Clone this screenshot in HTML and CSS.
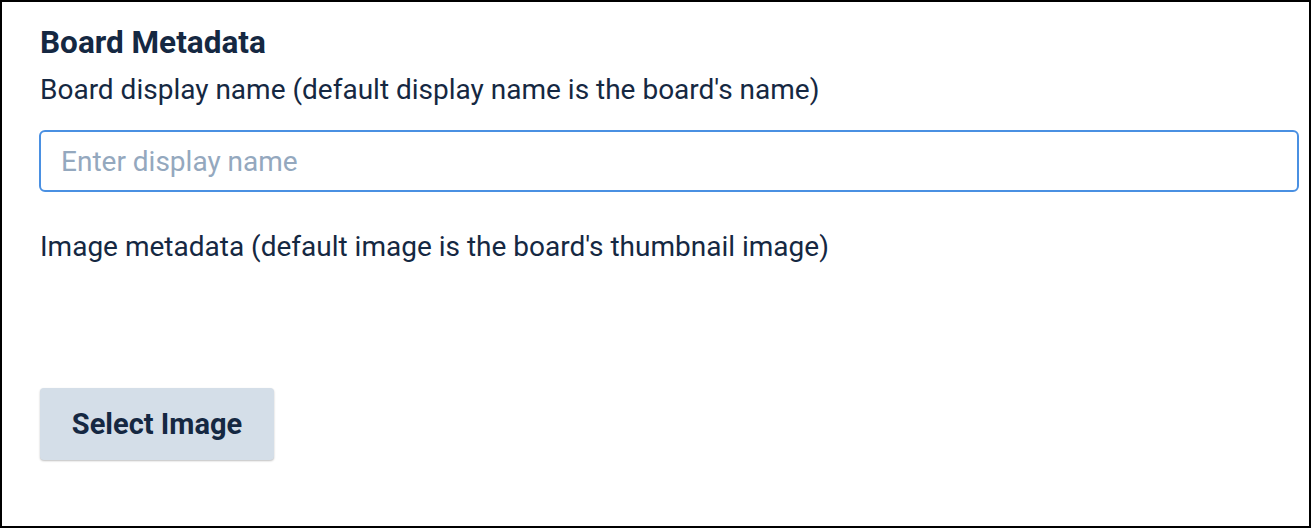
FILE: index.html
```html
<!DOCTYPE html>
<html>
<head>
<meta charset="utf-8">
<link rel="stylesheet" href="styles.css">
</head>
<body>
<div class="frame">
  <section class="panel">
    <h2 class="title">Board Metadata</h2>
    <label class="label" for="dn">Board display name (default display name is the board's name)</label>
    <input id="dn" class="text-input" type="text" placeholder="Enter display name">
    <p class="label image-label">Image metadata (default image is the board's thumbnail image)</p>
    <div class="image-slot"></div>
    <button class="btn" type="button">Select Image</button>
  </section>
</div>
</body>
</html>
```
FILE: styles.css
```css
* { box-sizing: border-box; }
html, body { margin: 0; padding: 0; background: #fff; }
body { font-family: Roboto, "Noto Sans", sans-serif; color: #152842; }
.frame {
  width: 1311px;
  height: 528px;
  border: 2px solid #000;
  background: #fff;
}
.panel {
  display: flex;
  flex-direction: column;
  align-items: flex-start;
  padding: 22px 10px 0 37px;
}
.title {
  margin: 0;
  font-size: 31.5px;
  line-height: 37px;
  font-weight: 700;
  padding-left: 1px;
}
.label {
  margin: 12px 0 0;
  font-size: 28px;
  line-height: 34px;
  font-weight: 400;
  padding-left: 1px;
}
.text-input {
  align-self: stretch;
  margin-top: 23px;
  height: 62px;
  border: 2px solid #4a90e2;
  border-radius: 6px;
  padding: 0 20px;
  font-family: inherit;
  font-size: 28px;
  color: #152842;
  outline: none;
}
.text-input::placeholder { color: #94a8be; }
.image-label { margin-top: 38px; }
.image-slot { height: 124px; }
.btn {
  width: 234px;
  height: 72px;
  border: 0;
  border-radius: 4px;
  background: #d4dee8;
  box-shadow: 0 1px 2px rgba(0,0,0,0.25);
  font-family: inherit;
  font-size: 29px;
  font-weight: 700;
  color: #152842;
  padding: 0;
  margin-left: 1px;
}
```
